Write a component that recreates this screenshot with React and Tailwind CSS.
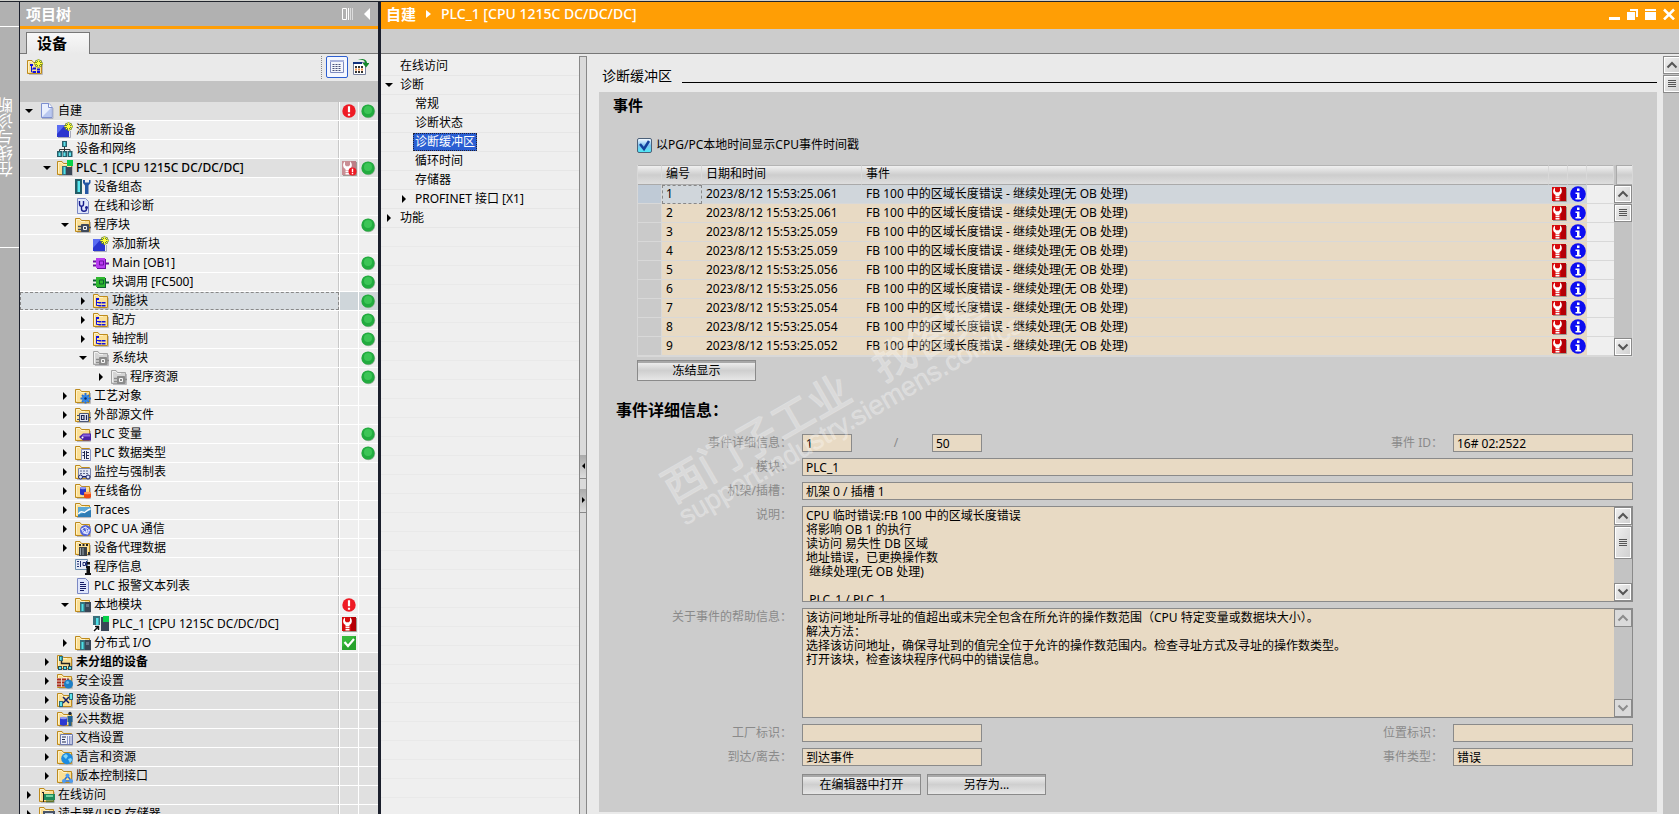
import React, { useState } from "react";

const indents = ["pl-[4px]", "pl-[22px]", "pl-[40px]", "pl-[58px]", "pl-[76px]"];

const treeRows = [
  { id: 1, level: 0, arrow: "open", icon: "doc", text: "自建", shade: true, state: "error", online: true },
  { id: 2, level: 1, icon: "add", text: "添加新设备" },
  { id: 3, level: 1, icon: "network", text: "设备和网络" },
  { id: 4, level: 1, arrow: "open", icon: "station", text: "PLC_1 [CPU 1215C DC/DC/DC]", shade: true, medium: true, state: "wrenchPale", online: true },
  { id: 5, level: 2, icon: "config", text: "设备组态" },
  { id: 6, level: 2, icon: "diag", text: "在线和诊断" },
  { id: 7, level: 2, arrow: "open", icon: "blocks", text: "程序块", online: true },
  { id: 8, level: 3, icon: "add", text: "添加新块" },
  { id: 9, level: 3, icon: "ob", text: "Main [OB1]", online: true },
  { id: 10, level: 3, icon: "fc", text: "块调用 [FC500]", online: true },
  { id: 11, level: 3, arrow: "closed", icon: "group", text: "功能块", online: true },
  { id: 12, level: 3, arrow: "closed", icon: "group", text: "配方", online: true },
  { id: 13, level: 3, arrow: "closed", icon: "group", text: "轴控制", online: true },
  { id: 14, level: 3, arrow: "open", icon: "system", text: "系统块", online: true },
  { id: 15, level: 4, arrow: "closed", icon: "system", text: "程序资源", online: true },
  { id: 16, level: 2, arrow: "closed", icon: "gear", text: "工艺对象" },
  { id: 17, level: 2, arrow: "closed", icon: "source", text: "外部源文件" },
  { id: 18, level: 2, arrow: "closed", icon: "tags", text: "PLC 变量", online: true },
  { id: 19, level: 2, arrow: "closed", icon: "types", text: "PLC 数据类型", online: true },
  { id: 20, level: 2, arrow: "closed", icon: "watch", text: "监控与强制表" },
  { id: 21, level: 2, arrow: "closed", icon: "backup", text: "在线备份" },
  { id: 22, level: 2, arrow: "closed", icon: "traces", text: "Traces" },
  { id: 23, level: 2, arrow: "closed", icon: "opc", text: "OPC UA 通信" },
  { id: 24, level: 2, arrow: "closed", icon: "proxy", text: "设备代理数据" },
  { id: 25, level: 2, icon: "info", text: "程序信息" },
  { id: 26, level: 2, icon: "textlist", text: "PLC 报警文本列表" },
  { id: 27, level: 2, arrow: "open", icon: "modules", text: "本地模块", state: "error" },
  { id: 28, level: 3, icon: "plcLink", text: "PLC_1 [CPU 1215C DC/DC/DC]", state: "wrench" },
  { id: 29, level: 2, arrow: "closed", icon: "modules", text: "分布式 I/O", state: "ok" },
  { id: 30, level: 1, arrow: "closed", icon: "ungrouped", text: "未分组的设备", shade: true, bold: true },
  { id: 31, level: 1, arrow: "closed", icon: "security", text: "安全设置", shade: true },
  { id: 32, level: 1, arrow: "closed", icon: "cross", text: "跨设备功能", shade: true },
  { id: 33, level: 1, arrow: "closed", icon: "common", text: "公共数据", shade: true },
  { id: 34, level: 1, arrow: "closed", icon: "docset", text: "文档设置", shade: true },
  { id: 35, level: 1, arrow: "closed", icon: "globe", text: "语言和资源", shade: true },
  { id: 36, level: 1, arrow: "closed", icon: "version", text: "版本控制接口", shade: true },
  { id: 37, level: 0, arrow: "closed", icon: "online", text: "在线访问", shade: true },
  { id: 38, level: 0, arrow: "closed", icon: "card", text: "读卡器/USB 存储器", shade: true },
];

const navItems = [
  { text: "在线访问", level: 0 },
  { text: "诊断", level: 0, arrow: "open" },
  { text: "常规", level: 1 },
  { text: "诊断状态", level: 1 },
  { text: "诊断缓冲区", level: 1 },
  { text: "循环时间", level: 1 },
  { text: "存储器", level: 1 },
  { text: "PROFINET 接口 [X1]", level: 1, arrow: "closed" },
  { text: "功能", level: 0, arrow: "closed" },
];

const eventText = "FB 100 中的区域长度错误 - 继续处理(无 OB 处理)";
const events = [
  "25.061",
  "25.061",
  "25.059",
  "25.059",
  "25.056",
  "25.056",
  "25.054",
  "25.054",
  "25.052",
].map((s, i) => ({ no: i + 1, time: `2023/8/12 15:53:${s}`, text: eventText }));

const description = `CPU 临时错误:FB 100 中的区域长度错误
将影响 OB 1 的执行
读访问 易失性 DB 区域
地址错误，已更换操作数
 继续处理(无 OB 处理)

 PLC_1 / PLC_1`;

const helpText = `该访问地址所寻址的值超出或未完全包含在所允许的操作数范围（CPU 特定变量或数据块大小）。
解决方法：
选择该访问地址，确保寻址到的值完全位于允许的操作数范围内。检查寻址方式及寻址的操作数类型。
打开该块，检查该块程序代码中的错误信息。`;

const Svg = ({ children, size = 16 }) => (
  <svg width={size} height={size} viewBox={`0 0 ${size} ${size}`} className="shrink-0" aria-hidden="true">
    {children}
  </svg>
);

const Folder = ({ gray, children }) => (
  <Svg>
    <path d="M2 15.5h13.5V5" fill="none" stroke="#b9b9bd" />
    <path
      d="M.5 14.5v-13h4.5l1.5 2h8v11z"
      fill={gray ? "#d4d4d4" : "#fbdf94"}
      stroke={gray ? "#a3a3a3" : "#bd8a1d"}
    />
    <path d="M1.500 13V2.500h3l1.500 2h4" fill="none" stroke={gray ? "#f2f2f2" : "#fff3c9"} />
    {children}
  </Svg>
);

const Star = () => (
  <g>
    <path d="M11.500 0v9M7 4.500h9M8.500 1.500l6 6M14.500 1.500l-6 6" stroke="#6f8a20" strokeWidth="1.800" />
    <path d="M11.500 .5v8M7.500 4.500h8M9 2l5 5M14 2l-5 5" stroke="#ffff3c" />
  </g>
);

const Block = ({ fill, dark }) => (
  <g>
    <path d="M0 6.500h5M0 10.500h5M12 8.500h4" stroke={dark} strokeWidth="2" />
    <path d="M4 4h9v10H4z" fill={dark} />
    <path d="M3 3h9v10H3z" fill={fill} />
    <path d="M6.500 6h4v4h-4z" fill={fill} stroke={dark} />
  </g>
);

const SmallBlock = ({ color }) => (
  <g>
    <path d="M3 9.500h4M3 12.500h4M13 10.500h3" stroke={color} strokeWidth="1.500" />
    <path d="M6.500 7.500h7v7h-7z" fill={color} stroke={color} />
    <path d="M8.500 9.500h3v3h-3z" fill={color} stroke="#f4f4f4" />
  </g>
);

const Sheet = () => <path d="M2.500 .5h8l3 3v12h-11z" fill="#dfe6fb" stroke="#7b88c4" />;

const icons = {
  doc: (
    <Svg>
      <path d="M3 15.500h11V5" fill="none" stroke="#aeb3c4" />
      <path d="M2.500 .5h7.500l3 3.500v10.500h-10.500z" fill="#e9effd" stroke="#7d8fd0" />
      <path d="M3 14L12 5v9z" fill="#b9c8f0" />
      <path d="M9.500 .5v4h4" fill="#fff" stroke="#7d8fd0" />
    </Svg>
  ),
  add: (
    <Svg>
      <path d="M1 15.500h12.500V9" fill="none" stroke="#a9aabb" />
      <path d="M0 3h12v12H0z" fill="#2a35cf" />
      <path d="M0 3h8L0 12z" fill="#5a6cf2" />
      <Star />
    </Svg>
  ),
  network: (
    <Svg>
      <path d="M7.500 5v4M2.500 11V8.500h10.500V11M7.500 8v3" fill="none" stroke="#333" />
      <path d="M5 0h5v6H5zM0 10h5v6H0zM5.500 10h4.500v6H5.500zM10.500 10h5v6h-5z" fill="#28606c" />
      <path d="M6.500 1h2v4h-2zM1.500 11.500h2V15h-2zM6.500 11.500h2V15h-2zM12 11.500h2V15h-2z" fill="#5fe3ec" />
    </Svg>
  ),
  station: (
    <Folder>
      <path d="M5 6h5v9H5z" fill="#37707c" />
      <path d="M6.500 7h2v7h-2z" fill="#4fe0e8" />
      <path d="M9 7h6v8H9z" fill="#394656" />
      <path d="M10 0h6v6h-6z" fill="#08d14a" />
    </Folder>
  ),
  config: (
    <Svg>
      <path d="M0 0h7v15H0z" fill="#225c66" />
      <path d="M2.500 2h2.500v11H2.500z" fill="#58e6ee" />
      <path d="M8 1v3l2 2.500V15h3.500V6.500l2-2.500V1h-1.500v2.500h-4V1z" fill="#2456a4" />
    </Svg>
  ),
  diag: (
    <Svg>
      <Sheet />
      <path d="M4.500 3v3c0 3 4 3 4 0V3M6.500 8v3c0 3 5 3 5 0" fill="none" stroke="#151a8c" strokeWidth="1.400" />
      <circle cx="11.500" cy="9.500" r="1.500" fill="#151a8c" />
    </Svg>
  ),
  blocks: <Folder><SmallBlock color="#3f4a5c" /></Folder>,
  system: <Folder gray><SmallBlock color="#8b8b8b" /></Folder>,
  ob: <Svg><Block fill="#b93bf0" dark="#6a0fa0" /></Svg>,
  fc: <Svg><Block fill="#2fb82f" dark="#0d5f33" /></Svg>,
  group: (
    <Folder>
      <path d="M3 5h3v2H3zM5.500 9h3v1.500h-3zM9 9h3.500v1.500H9zM5.500 12h3v1.500h-3zM9 12h3.500v1.500H9z" fill="#1010e0" />
      <path d="M3.500 7v5.500H6M3.500 9.500H6" fill="none" stroke="#1010e0" />
    </Folder>
  ),
  groupNew: (
    <Folder>
      <path d="M3 5h3v2H3zM6 8.500h3v2H6zM10 9.500h3v2h-3zM6 12h3v2H6zM10 12h3v2h-3z" fill="#1010e0" />
      <path d="M4.500 7v6H6M4.500 10H6" fill="none" stroke="#1010e0" />
      <Star />
    </Folder>
  ),
  gear: (
    <Folder>
      <path d="M10.500 5v10.500M5.500 10.500h10.500M7 7l7 7M14 7l-7 7" stroke="#2471d6" strokeWidth="2" />
      <circle cx="10.500" cy="10.500" r="3.200" fill="#2f86ea" />
      <circle cx="10.500" cy="10.500" r="1.200" fill="#0c2c66" />
    </Folder>
  ),
  source: (
    <Folder>
      <path d="M2 8.500h3M2 12.500h3M14 10.500h2" stroke="#3b4560" />
      <path d="M4.500 6.500h9v8h-9z" fill="#e4e8f5" stroke="#4a5575" />
      <path d="M6.500 8.500h2.500v4H6.500zM11.500 8v5" fill="none" stroke="#1b2350" strokeWidth="1.200" />
    </Folder>
  ),
  tags: (
    <Folder>
      <path d="M4 11l4-3.500h8v7H8z" fill="#4b22a8" />
      <path d="M8 8.500h7v2H7z" fill="#8a63e0" />
      <circle cx="7.500" cy="11.500" r="1" fill="#fff" />
    </Folder>
  ),
  types: (
    <Folder>
      <path d="M6.500 4.500h9v11h-9z" fill="#eef1fc" stroke="#8b95c5" />
      <path d="M9.500 6v8M9.500 7.500h-2M9.500 10.500h-2M11 7.500h3M11 10.500h3M11 13.500h3M11.500 6v8" stroke="#20284f" />
    </Folder>
  ),
  watch: (
    <Folder>
      <path d="M3.500 4.500h12v9h-12z" fill="#e3e7f5" stroke="#7d86ac" />
      <path d="M5 7h9M5 9.500h9" stroke="#5d6790" strokeDasharray="2 1" />
      <circle cx="5.500" cy="13" r="2" fill="#dce4ff" stroke="#1c2468" />
      <circle cx="13" cy="13" r="2" fill="#dce4ff" stroke="#1c2468" />
      <path d="M7.500 12.500h3.500" stroke="#1c2468" />
    </Folder>
  ),
  backup: (
    <Folder>
      <path d="M5 5c0-1.500 6-1.500 6 0v6c0 1.500-6 1.500-6 0z" fill="#2835c8" />
      <ellipse cx="8" cy="5" rx="3" ry="1.200" fill="#8d97f4" />
      <path d="M9 10c0-1.500 7-1.500 7 0v4c0 1.800-7 1.800-7 0z" fill="#ef4a12" />
      <ellipse cx="12.500" cy="10" rx="3.500" ry="1.200" fill="#ff9c5c" />
    </Folder>
  ),
  traces: (
    <Folder>
      <path d="M3 5h13v10H3z" fill="#2f7db5" />
      <path d="M3 5h13v3L3 13z" fill="#5ba8d6" />
      <path d="M3.500 12c2-4 4-2 5.500-1.500s3-3 6.500-3.500" fill="none" stroke="#fff" strokeWidth="1.300" />
    </Folder>
  ),
  opc: (
    <Folder>
      <circle cx="10.500" cy="9.500" r="5.500" fill="#5164d8" />
      <path d="M6.500 8l4-2 4 3-2 4-4-1zM10.500 6l2 7M6.500 8l6 5M14.500 9l-6 3" fill="none" stroke="#e3e8ff" />
    </Folder>
  ),
  proxy: (
    <Folder>
      <path d="M4 7h8v9H4z" fill="#3b4249" />
      <path d="M5.500 8v7M8 8v7" stroke="#9aa5ae" />
      <path d="M4 5h9" stroke="#222" strokeWidth="2" strokeDasharray="2 1.500" />
      <path d="M13 12h2v3h-2z" fill="#333" />
    </Folder>
  ),
  info: (
    <Svg>
      <path d="M.5 .5h12v10H.5z" fill="#e6ebf7" stroke="#6c8fae" />
      <path d="M2 2.500h2M2 5h2M2 7.500h2M5.500 2v6M8 3.500h2.500v3H8zM11.500 2v6" fill="none" stroke="#1c2b70" />
      <path d="M12 3h3v2.500h-3zM11 7h4v7h1.500v2H10v-2h1.500V9H11z" fill="#111" />
    </Svg>
  ),
  textlist: (
    <Svg>
      <Sheet />
      <path d="M5 4.500h4M5 6.500h6M5 8.500h6M5 10.500h6M5 12.500h4" stroke="#141a66" />
    </Svg>
  ),
  modules: (
    <Folder>
      <path d="M5 5h5v10H5z" fill="#37707c" />
      <path d="M6.500 7h2v7h-2z" fill="#4fe0e8" />
      <path d="M10 5h6v10h-6z" fill="#394656" />
      <path d="M11 7h3v3h-3z" fill="#677689" />
    </Folder>
  ),
  plcLink: (
    <Svg>
      <path d="M0 0h7v11H0z" fill="#37707c" />
      <path d="M3 2h2.500v9H3z" fill="#4fe0e8" />
      <path d="M8 1h8v14H8z" fill="#394656" />
      <path d="M10 0h6v6h-6z" fill="#08d14a" />
      <path d="M0 9h7v7H0z" fill="#fff" />
      <path d="M1 15l4-4M2 10.500h3.500V14" fill="none" stroke="#111" strokeWidth="1.500" />
    </Svg>
  ),
  ungrouped: (
    <Folder>
      <path d="M4.500 6v3.500h8V12" fill="none" stroke="#222" strokeWidth="1.400" />
      <path d="M2 2h4v5H2z" fill="#2b6b78" />
      <path d="M3 3h1.500v3H3z" fill="#5fe3ec" />
      <path d="M1 12h4v4H1zM6 12h4v4H6zM11 12h4v4h-4z" fill="#2b4c58" />
      <path d="M2 13h2v2H2zM7 13h2v2H7zM12 13h2v2h-2z" fill="#5fe3ec" />
    </Folder>
  ),
  security: (
    <Folder>
      <path d="M0 5h12v9H0z" fill="#e9d8cc" />
      <path d="M0 6.500h12M0 9.500h12M0 12.500h12" stroke="#a8291b" strokeWidth="2" strokeDasharray="4 1" />
      <circle cx="11.500" cy="11" r="4.500" fill="#1d7fc6" />
      <circle cx="10.500" cy="9.500" r="1.600" fill="#63b8ec" />
    </Folder>
  ),
  cross: (
    <Folder>
      <path d="M6 5l6 6M12 5l-6 6" stroke="#111f6b" strokeWidth="1.500" />
      <path d="M2 9h4v6H2zM12 1h4v7h-4z" fill="#2b6b78" />
      <path d="M3 10h2v4H3zM13 2h2v5h-2z" fill="#5fe3ec" />
    </Folder>
  ),
  common: (
    <Folder>
      <path d="M3 7c0-1.500 7-1.500 7 0v6.500c0 1.500-7 1.500-7 0z" fill="#2b38d2" />
      <ellipse cx="6.500" cy="7" rx="3.500" ry="1.200" fill="#8d97f4" />
      <circle cx="13" cy="2.500" r="1.700" fill="#1b2738" />
      <path d="M10.500 5h5v6h-1v4h-3v-4h-1z" fill="#1f5f93" />
    </Folder>
  ),
  docset: (
    <Folder>
      <path d="M3.500 4.500h12v10h-12z" fill="#eef1fc" stroke="#6f7bb0" />
      <path d="M5 7h4M5 9.500h3M5 12h4" stroke="#20284f" />
      <path d="M10.500 6v8M12.500 6v8M14 6v8" stroke="#8b95c5" />
    </Folder>
  ),
  globe: (
    <Folder>
      <circle cx="10" cy="9.500" r="5.800" fill="#1c8be0" />
      <path d="M6 7l3-2 2 2-2 3zM11 10l3-1 1 2-2 3z" fill="#83d6f7" />
    </Folder>
  ),
  version: (
    <Folder>
      <path d="M10.500 8l-4 5h8z" fill="none" stroke="#2a6fd0" strokeWidth="1.500" />
      <circle cx="10.500" cy="7.500" r="2" fill="#4d9bf0" />
      <circle cx="7" cy="13" r="2" fill="#4d9bf0" />
      <circle cx="14" cy="13" r="2" fill="#4d9bf0" />
    </Folder>
  ),
  online: (
    <Folder>
      <path d="M4.500 5v10M3 5.500h2" stroke="#222" />
      <path d="M5 7h11v6H5z" fill="#1f8a5b" />
      <path d="M7 8h7v2H7z" fill="#6fd0a0" />
      <path d="M8 13v2.500M10 13v2.500M12 13v2.500M14 13v2.500" stroke="#0d5f33" />
    </Folder>
  ),
  card: (
    <Folder>
      <path d="M4 5h12v11H4z" fill="#4a5568" />
      <path d="M6 7h8v3H6z" fill="#c8d2df" />
    </Folder>
  ),
};

const Wrench = ({ pale }) => (
  <Svg>
    <path d="M2 15.500h13.500V2" fill="none" stroke="#9f9a94" />
    <path d="M1 1h14v14H1z" fill={pale ? "#c98f95" : "#d60a0c"} />
    <path d="M10 1h5v14h-5z" fill={pale ? "#bd7f86" : "#b40006"} />
    <path
      d="M4 1.500C1.500 3 1.300 7.500 4.500 9v1.500h4V9c3.200-1.500 3-6 .5-7.500V5L7.800 6.300H5.200L4 5z"
      fill="#fff"
    />
    <path d="M4.500 11h4v1.200h-4zM4.500 13h4v1.500h-4z" fill="#fff" />
    {pale && <circle cx="11.500" cy="11.500" r="4" fill="#ee1a24" />}
    {pale && <path d="M11.500 8.800v3.400M11.500 13v1.300" stroke="#fff" strokeWidth="1.400" />}
  </Svg>
);

const states = {
  error: (
    <Svg>
      <circle cx="8" cy="8" r="6.700" fill="#ee1a24" />
      <path d="M8 3.300v6M8 10.700v2" stroke="#fff" strokeWidth="2.200" />
    </Svg>
  ),
  wrenchPale: <Wrench pale />,
  wrench: <Wrench />,
  ok: (
    <Svg>
      <path d="M1 1h14v14H1z" fill="#28a32c" />
      <path d="M1 1h14L1 12z" fill="#35b83a" />
      <path d="M3.500 7l3.500 4 6-7" fill="none" stroke="#fff" strokeWidth="2.200" />
    </Svg>
  ),
};

const GreenDot = () => (
  <Svg>
    <circle cx="8.500" cy="8.500" r="6.700" fill="#a9b5a9" />
    <circle cx="8" cy="8" r="6.600" fill="#22ab3f" />
    <circle cx="8" cy="7" r="4" fill="#3cc556" />
  </Svg>
);

const InfoDot = () => (
  <Svg>
    <circle cx="8" cy="8" r="7.800" fill="#0d0df0" />
    <path d="M7 2.500h2.500v2.500H7zM5.500 6.500h4v5.500H11v1.500H5.500V12H7V8H5.500z" fill="#fff" />
  </Svg>
);

const Arrow = ({ dir }) => (
  <Svg size={12}>
    {dir === "open" ? <path d="M1 4h8L5 8z" fill="#000" /> : <path d="M3 2v8l4-4z" fill="#000" />}
  </Svg>
);

const ScrollButton = ({ kind, disabled, tall, label }) => (
  <button
    type="button"
    aria-label={label}
    disabled={disabled}
    className={`flex w-[18px] shrink-0 items-center justify-center border border-[#8a8a8a] ${
      tall ? "h-[33px]" : "h-[18px]"
    } ${disabled ? "bg-[#dadada] text-[#8c8c8c]" : "bg-linear-to-br from-[#f0f0f0] to-[#cfcfcf] text-[#555] inset-ring inset-ring-white"}`}
  >
    <svg width="12" height="10" viewBox="0 0 12 10" fill="none" stroke="currentColor" aria-hidden="true">
      {kind === "up" && <path d="M1.500 7.500L6 3l4.500 4.500" strokeWidth="2" />}
      {kind === "down" && <path d="M1.500 2.500L6 7l4.500-4.500" strokeWidth="2" />}
      {kind === "grip" && <path d="M2 1.500h8M2 3.500h8M2 5.500h8M2 7.500h8" />}
    </svg>
  </button>
);

const ProjectTree = () => {
  const [selected, setSelected] = useState(11);

  return (
    <aside className="flex w-[358px] shrink-0 flex-col overflow-hidden">
      <header className="flex h-[27px] shrink-0 items-center border-b-3 border-[#ff9e05] bg-[#b1b1b1] pr-[7px] pb-px pl-[6px]">
        <h2 className="text-[15px] leading-5 font-bold text-white">项目树</h2>
        <button type="button" aria-label="列" className="ml-auto">
          <svg width="12" height="12" viewBox="0 0 12 12" stroke="#fff" fill="none">
            <path d="M.5 .5h4v11h-4zM6.500 0v12" />
            <path d="M8.500 0v12M10.500 0v12" stroke="#dcdcdc" />
          </svg>
        </button>
        <button type="button" aria-label="折叠" className="ml-[9px]">
          <svg width="8" height="12" viewBox="0 0 8 12">
            <path d="M7 0v12L1 6z" fill="#fff" />
          </svg>
        </button>
      </header>

      <div className="flex h-[25px] shrink-0 items-end bg-[#ccc]">
        <div className="w-[6px] border-b border-[#777]" />
        <button
          type="button"
          className="h-[22px] w-16 border-x border-t border-[#777] bg-linear-to-b from-[#f8f8f8] to-[#eaeaea] pr-3 pb-[2px] text-[15px] leading-[18px] font-bold"
        >
          设备
        </button>
        <div className="flex-1 border-b border-[#777]" />
      </div>

      <div className="flex h-[27px] shrink-0 items-center bg-[#eaeaea] pr-[9px] pb-px pl-[7px]">
        <button type="button" aria-label="添加新组">{icons.groupNew}</button>
        <div className="ml-auto h-[23px] border-l border-dotted border-[#888]" />
        <button
          type="button"
          aria-label="总览"
          className="ml-1 flex size-[22px] items-center justify-center rounded-xs border border-[#2d5fd0] bg-[#f4f7ff]"
        >
          <Svg>
            <path d="M1.500 1.500h13v12h-13z" fill="#f4f6fc" stroke="#7e8bc0" />
            <path d="M1 2h14" stroke="#aab4dd" strokeWidth="2" />
            <path d="M3.500 5.500h9M3.500 7.500h9M3.500 9.500h9M3.500 11.500h9" stroke="#4a527a" strokeDasharray="2 1" />
          </Svg>
        </button>
        <button type="button" aria-label="转到" className="ml-[5px]">
          <Svg>
            <path d="M.5 3.500h12v12H.5z" fill="#fff" stroke="#77809c" />
            <path d="M0 4h9" stroke="#12307c" strokeWidth="2" />
            <path d="M2 8h9M2 13h9" stroke="#333" strokeWidth="2" strokeDasharray="2 1" />
            <path d="M2 10.500h9" stroke="#f09048" strokeWidth="2" strokeDasharray="2 1" />
            <path d="M5 1c4-1 7 0 7 3h-2.500l3.500 4.500L16.500 4H14C14 0 8-1 5 1z" fill="#15882c" />
          </Svg>
        </button>
      </div>
      <div className="h-[21px] shrink-0 bg-[#c3c3c3]" />

      <ul role="tree" aria-label="项目树" className="min-h-0 flex-1 overflow-hidden bg-[#efefef]">
        {treeRows.map((row) => {
          const active = selected === row.id;
          const cell = active ? "bg-[#cfd6da]" : row.shade ? "bg-[#e0e0e0]" : "bg-[#efefef]";
          return (
            <li
              key={row.id}
              role="treeitem"
              aria-selected={active}
              onClick={() => setSelected(row.id)}
              className="flex h-[19px] border-b border-white text-xs"
            >
              <div
                className={`flex min-w-0 flex-1 items-center border-r ${indents[row.level]} ${
                  active
                    ? "bg-[#d8dde1] border-[#c8c8c8] outline outline-dashed -outline-offset-1 outline-[#888]"
                    : `${cell} border-[#c8c8c8]`
                }`}
              >
                {row.arrow ? (
                  <button type="button" aria-label={`展开 ${row.text}`}>
                    <Arrow dir={row.arrow} />
                  </button>
                ) : (
                  <span className="w-3" />
                )}
                <span className="ml-[3px]">{icons[row.icon]}</span>
                <span
                  className={`ml-[3px] truncate leading-[18px] ${row.bold ? "font-bold" : ""} ${
                    row.medium ? "font-medium" : ""
                  }`}
                >
                  {row.text}
                </span>
              </div>
              <div className={`flex w-5 items-center justify-center border-x border-white pr-px ${cell}`}>
                {row.state && states[row.state]}
              </div>
              <div className={`flex w-[19px] items-center justify-center pr-[2px] ${cell}`}>
                {row.online && <GreenDot />}
              </div>
            </li>
          );
        })}
      </ul>
    </aside>
  );
};

const DiagNav = () => {
  const [current, setCurrent] = useState("诊断缓冲区");

  return (
    <nav className="w-[198px] shrink-0 bg-[#efefef] pt-[3px]">
      <ul>
        {navItems.map((item) => (
          <li
            key={item.text}
            className={`flex h-[19px] items-center border-b border-[#e6e6e6] text-xs ${
              item.level ? "pl-[18px]" : "pl-[3px]"
            }`}
          >
            {item.arrow ? <Arrow dir={item.arrow} /> : <span className="w-3" />}
            <button
              type="button"
              onClick={() => setCurrent(item.text)}
              className={`ml-[2px] px-[2px] leading-[18px] ${
                current === item.text
                  ? "bg-[#2a5fd3] text-white outline outline-dotted -outline-offset-1 outline-[#223]"
                  : ""
              }`}
            >
              {item.text}
            </button>
          </li>
        ))}
        {Array.from({ length: 30 }, (_, i) => (
          <li key={i} aria-hidden="true" className="h-[19px] border-b border-[#e9e9e9]" />
        ))}
      </ul>
    </nav>
  );
};

const Splitter = () => (
  <div className="mt-[2px] flex w-2 shrink-0 flex-col items-stretch justify-center gap-[10px] border-x border-t border-[#888] bg-[#dadada] pt-24">
    <button type="button" aria-label="向左" className="h-6 border-b border-[#888] bg-linear-to-b from-[#aaa] to-[#ddd]">
      <svg width="6" height="8" viewBox="0 0 6 8"><path d="M5 1v6L2 4z" /></svg>
    </button>
    <button type="button" aria-label="向右" className="h-6 border-b border-[#888] bg-linear-to-b from-[#aaa] to-[#ddd]">
      <svg width="6" height="8" viewBox="0 0 6 8"><path d="M2 1v6l3-3z" /></svg>
    </button>
  </div>
);

const PushButton = ({ children }) => (
  <button
    type="button"
    className="h-[21px] w-[119px] border border-[#8a8a8a] bg-linear-to-b from-[#f4f4f4] via-[#cfcfcf] to-[#e6e6e6] text-xs leading-[18px] shadow-[inset_0_2px_0_#a8a8a8]"
  >
    {children}
  </button>
);

const headCell =
  "h-5 border-t border-b border-t-[#b4b4b4] border-b-[#aaa] border-r border-r-[#d8d8d8] bg-linear-to-b from-[#f0f0f0] via-[#cdcdcd] to-[#dedede] px-1 pt-0 pb-[2px] text-left font-normal leading-4";

const EventTable = () => {
  const [active, setActive] = useState(1);

  return (
    <div className="mt-[10px] flex border-r border-b border-[#d8d8d8]">
      <table className="flex-1 table-fixed border-separate border-spacing-0 border-l border-[#d8d8d8] text-xs">
        <colgroup>
          <col className="w-6" />
          <col className="w-10" />
          <col className="w-40" />
          <col />
          <col className="w-[19px]" />
          <col className="w-[19px]" />
          <col className="w-[27px]" />
        </colgroup>
        <thead>
          <tr>
            <th className={headCell} />
            <th className={headCell}>编号</th>
            <th className={headCell}>日期和时间</th>
            <th className={headCell}>事件</th>
            <th className={headCell} />
            <th className={headCell} />
            <th className={headCell} />
          </tr>
        </thead>
        <tbody>
          {events.map((e) => {
            const on = active === e.no;
            const cell = `h-[19px] border-b border-[#d8d8d8] p-0 leading-[18px] ${on ? "bg-[#d0d6db]" : "bg-[#e8dac4]"}`;
            return (
              <tr key={e.no} onClick={() => setActive(e.no)}>
                <td
                  className={`h-[19px] border-r border-b border-[#d8d8d8] p-0 ${on ? "bg-[#bfcad6]" : "bg-[#cacaca]"}`}
                />
                <td
                  className={`${cell} ${on ? "outline outline-dashed -outline-offset-1 outline-[#888]" : ""}`}
                >
                  <span className="px-1">{e.no}</span>
                </td>
                <td className={cell}>
                  <span className="px-1">{e.time}</span>
                </td>
                <td className={cell}>
                  <span className="px-1">{e.text}</span>
                </td>
                <td className={cell}>
                  <span className="flex justify-center"><Wrench /></span>
                </td>
                <td className={cell}>
                  <span className="flex justify-center"><InfoDot /></span>
                </td>
                <td className="h-[19px] border-b border-[#d8d8d8] bg-[#efefef] p-0" />
              </tr>
            );
          })}
        </tbody>
      </table>
      <div className="flex w-[18px] shrink-0 flex-col bg-[#c3c3c3]">
        <div className="ml-[2px] h-5 border-y border-l border-[#aaa] bg-linear-to-b from-[#f0f0f0] via-[#cdcdcd] to-[#dedede]" />
        <ScrollButton kind="up" label="向上滚动" />
        <div className="h-px" />
        <ScrollButton kind="grip" label="滚动条" />
        <div className="flex-1" />
        <ScrollButton kind="down" label="向下滚动" />
      </div>
    </div>
  );
};

const fieldClass = "h-[18px] border border-[#8a8a8a] bg-[#e8dac4] px-[3px] text-xs leading-4 text-black";
const labelClass = "text-right text-xs leading-[18px] text-[#8a8a8a]";

const Field = ({ id, value, className }) => (
  <input id={id} type="text" readOnly defaultValue={value} className={`${fieldClass} ${className}`} />
);

const TextBox = ({ id, value, height, scroll }) => (
  <div className={`flex border border-[#8a8a8a] bg-[#e8dac4] ${height}`}>
    <textarea
      id={id}
      readOnly
      defaultValue={value}
      className="min-w-0 flex-1 resize-none overflow-hidden px-[3px] pt-[2px] text-xs leading-[14px] text-black"
    />
    <div className="flex w-[18px] flex-col bg-[#c3c3c3]">
      <ScrollButton kind="up" label="向上滚动" disabled={!scroll} />
      {scroll && <div className="h-px" />}
      {scroll && <ScrollButton kind="grip" label="滚动条" tall />}
      <div className="flex-1" />
      <ScrollButton kind="down" label="向下滚动" disabled={!scroll} />
    </div>
  </div>
);

const EventDetails = () => (
  <form className="mt-[14px] grid grid-cols-[155px_1fr] gap-x-[10px] gap-y-[6px]" onSubmit={(e) => e.preventDefault()}>
    <label htmlFor="detail" className={labelClass}>事件详细信息：</label>
    <div className="flex">
      <Field id="detail" value="1" className="w-[50px]" />
      <span className="w-20 pl-2 text-center text-xs leading-[18px] text-[#8a8a8a]">/</span>
      <Field id="total" value="50" className="w-[50px]" />
      <label htmlFor="eventId" className={`${labelClass} mr-[10px] ml-auto`}>事件 ID：</label>
      <Field id="eventId" value="16# 02:2522" className="w-[180px]" />
    </div>

    <label htmlFor="module" className={labelClass}>模块：</label>
    <Field id="module" value="PLC_1" className="w-full" />

    <label htmlFor="rack" className={labelClass}>机架/插槽：</label>
    <Field id="rack" value="机架 0 / 插槽 1" className="w-full" />

    <label htmlFor="desc" className={labelClass}>说明：</label>
    <TextBox id="desc" value={description} height="h-24" scroll />

    <label htmlFor="help" className={labelClass}>关于事件的帮助信息：</label>
    <TextBox id="help" value={helpText} height="h-[110px]" />

    <label htmlFor="plant" className={labelClass}>工厂标识：</label>
    <div className="flex">
      <Field id="plant" value="" className="w-[180px]" />
      <label htmlFor="location" className={`${labelClass} mr-[10px] ml-auto`}>位置标识：</label>
      <Field id="location" value="" className="w-[180px]" />
    </div>

    <label htmlFor="inout" className={labelClass}>到达/离去：</label>
    <div className="flex">
      <Field id="inout" value="到达事件" className="w-[180px]" />
      <label htmlFor="type" className={`${labelClass} mr-[10px] ml-auto`}>事件类型：</label>
      <Field id="type" value="错误" className="w-[180px]" />
    </div>

    <div className="col-start-2 mt-[2px] flex gap-[6px]">
      <PushButton>在编辑器中打开</PushButton>
      <PushButton>另存为...</PushButton>
    </div>
  </form>
);

const Watermark = () => (
  <div
    aria-hidden="true"
    className="pointer-events-none absolute top-[374px] left-[89px] origin-bottom-left -rotate-30 whitespace-nowrap text-white/30 [-webkit-text-stroke:1px_rgba(255,255,255,0.18)]"
  >
    <div className="h-9 text-[42px] leading-9 font-medium">西门子工业&nbsp;&nbsp;&nbsp;找答案</div>
    <div className="h-7 font-['Liberation_Sans',Arial,sans-serif] text-[27px] leading-7">
      support.industry.siemens.com/cs
    </div>
  </div>
);

const DiagnosticBuffer = () => {
  const [localTime, setLocalTime] = useState(true);

  return (
    <section className="flex min-w-0 flex-1 flex-col">
      <div className="flex h-[38px] shrink-0 items-end pl-[15px]">
        <h1 className="mb-[6px] text-sm leading-5">诊断缓冲区</h1>
        <div className="mb-[9px] ml-[10px] h-px flex-1 bg-black" />
      </div>
      <div className="relative ml-3 mb-[2px] min-h-0 flex-1 overflow-hidden bg-[#ccc] pt-[3px] pr-6 pl-[38px]">
        <h2 className="-ml-[24px] text-[15px] leading-5 font-bold">事件</h2>
        <label className="mt-5 flex h-5 w-fit items-center gap-1 text-xs">
          <span className="relative flex size-[15px]">
            <input
              type="checkbox"
              checked={localTime}
              onChange={(e) => setLocalTime(e.target.checked)}
              className="size-[15px] appearance-none rounded-xs border border-[#4b6079] bg-linear-to-b from-[#f2f8ff] via-[#7cc4f0] to-[#4ce8f4]"
            />
            {localTime && (
              <svg className="pointer-events-none absolute inset-0" width="15" height="15" viewBox="0 0 15 15">
                <path d="M3 6l4 5 5-8" fill="none" stroke="#12409c" strokeWidth="2.500" />
              </svg>
            )}
          </span>
          以PG/PC本地时间显示CPU事件时间戳
        </label>
        <EventTable />
        <div className="mt-[3px] flex">
          <PushButton>冻结显示</PushButton>
        </div>
        <h2 className="mt-[19px] -ml-[21px] text-base leading-5 font-bold">事件详细信息：</h2>
        <EventDetails />
        <Watermark />
      </div>
    </section>
  );
};

const WindowHeader = () => (
  <header className="flex h-[27px] shrink-0 items-center bg-[#ff9e05] pr-1 pb-[3px] pl-[5px] text-white">
    <span className="text-[15px] leading-5 font-bold">自建</span>
    <svg className="ml-[10px]" width="5" height="8" viewBox="0 0 5 8"><path d="M0 0v8l5-4z" fill="#fff" /></svg>
    <span className="ml-[10px] text-sm leading-5 font-medium">PLC_1 [CPU 1215C DC/DC/DC]</span>
    <div className="ml-auto flex gap-[6px]">
      <button type="button" aria-label="最小化">
        <svg width="12" height="12" viewBox="0 0 12 12"><path d="M0 9h11v3H0z" fill="#fff" /></svg>
      </button>
      <button type="button" aria-label="还原">
        <svg width="12" height="12" viewBox="0 0 12 12"><path d="M0 4h8v8H0zM3 1h8v8H9V3H3z" fill="#fff" /></svg>
      </button>
      <button type="button" aria-label="最大化">
        <svg width="12" height="12" viewBox="0 0 12 12"><path d="M0 1h11v2H0zM0 4h11v8H0z" fill="#fff" /></svg>
      </button>
      <button type="button" aria-label="关闭">
        <svg width="12" height="12" viewBox="0 0 12 12">
          <path d="M1 1.500l10 10M11 1.500l-10 10" stroke="#fff" strokeWidth="2.500" />
        </svg>
      </button>
    </div>
  </header>
);

const App = () => (
  <div className="flex h-screen w-full flex-col overflow-hidden bg-[#eaeaea] font-['Noto_Sans','Noto_Sans_CJK_SC',sans-serif] text-black">
    <div className="h-[2px] shrink-0 border-b border-[#20242c] bg-[#cfd0cc]" />
    <div className="flex min-h-0 flex-1">
      <div className="flex w-5 shrink-0 flex-col border-r border-[#1b1f2c] bg-[#b1b1b1]">
        <div className="h-6" />
        <button
          type="button"
          className="flex h-[222px] items-start justify-center border-y border-white pt-[70px]"
        >
          <span className="mr-[7px] rotate-180 text-base leading-4 text-white [writing-mode:vertical-rl]">
            在线与诊断
          </span>
        </button>
      </div>
      <ProjectTree />
      <main className="flex min-w-0 flex-1 flex-col border-l-3 border-[#1b1f2c]">
        <WindowHeader />
        <div className="h-[25px] shrink-0 border-b border-[#777] bg-[#ccc]" />
        <div className="flex min-h-0 flex-1 overflow-hidden">
          <DiagNav />
          <Splitter />
          <DiagnosticBuffer />
          <div className="mt-[2px] ml-[6px] flex w-4 shrink-0 flex-col overflow-hidden bg-[#c3c3c3]">
            <ScrollButton kind="up" label="向上滚动" />
            <div className="h-px" />
            <ScrollButton kind="grip" label="滚动条" />
          </div>
        </div>
      </main>
    </div>
  </div>
);

export default App;
